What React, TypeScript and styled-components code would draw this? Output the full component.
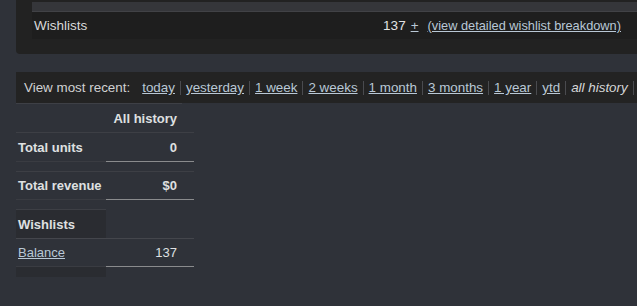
import React from 'react';
import styled, { createGlobalStyle } from 'styled-components';

const GlobalStyle = createGlobalStyle`
  html, body {
    margin: 0;
    padding: 0;
    background: #2f3239;
    overflow: hidden;
  }
  body {
    width: 637px;
    height: 306px;
    font-family: 'Liberation Sans', Arial, sans-serif;
    font-size: 13px;
    color: #d6d7d8;
  }
`;

const ranges = ['today', 'yesterday', '1 week', '2 weeks', '1 month', '3 months', '1 year', 'ytd'];

type Row = {
  label: string;
  value: string;
  height: number;
  link?: boolean;
  bold?: boolean;
  gapBefore?: boolean;
  section?: boolean;
};

const rows: Row[] = [
  { label: 'Total units', value: '0', height: 29, bold: true },
  { label: 'Total revenue', value: '$0', height: 28, bold: true, gapBefore: true },
  { label: 'Wishlists', value: '', height: 29, section: true, gapBefore: true },
  { label: 'Balance', value: '137', height: 28, link: true },
];

export default function App() {
  return (
    <Page>
      <GlobalStyle />
      <TopPanel>
        <TopStrip />
        <SummaryRow>
          <span>Wishlists</span>
          <SummaryValue>
            137 <Link href="#">+</Link>
            <BreakdownLink href="#">(view detailed wishlist breakdown)</BreakdownLink>
          </SummaryValue>
        </SummaryRow>
      </TopPanel>

      <RangeBar>
        <RangeLabel>View most recent:</RangeLabel>
        {ranges.map((r) => (
          <React.Fragment key={r}>
            <Link href="#">{r}</Link>
            <Sep />
          </React.Fragment>
        ))}
        <Current>all history</Current>
        <Sep />
      </RangeBar>

      <TopRule />
      <Stats>
        <LabelCell $height={29} $line="#3d3f45" />
        <ValueCell $height={29} $bold $line="#3d3f45">
          All history
        </ValueCell>
        {rows.map((row) => (
          <React.Fragment key={row.label}>
            {row.gapBefore && <Spacer $section={row.section} />}
            <LabelCell
              $height={row.height}
              $bold={row.bold || row.section}
              $section={row.section}
              $line={row.section ? '#44464c' : '#3a3c42'}
            >
              {row.link ? <Link href="#">{row.label}</Link> : row.label}
            </LabelCell>
            <ValueCell $height={row.height} $bold={row.bold} $line={row.section ? '#44464c' : '#8a8b8d'}>
              {row.value}
            </ValueCell>
          </React.Fragment>
        ))}
        <Tail />
      </Stats>
    </Page>
  );
}

const Page = styled.div`
  display: flex;
  flex-direction: column;
  padding-left: 16px;
`;

const TopPanel = styled.div`
  background: #222222;
  border-bottom-left-radius: 4px;
  padding: 2px 0 15px 16px;
`;

const TopStrip = styled.div`
  height: 9px;
  background: #35363a;
  border-bottom: 1px solid #414246;
`;

const SummaryRow = styled.div`
  display: flex;
  align-items: center;
  justify-content: space-between;
  height: 27px;
  padding: 0 16px 0 2px;
  background: #1e1e1e;
  font-size: 13.5px;
  color: #d8d9da;
`;

const SummaryValue = styled.span`
  display: flex;
  align-items: baseline;
  gap: 5px;
  color: #e2e3e4;
`;

const Link = styled.a`
  color: #b9c8d6;
  text-decoration: underline;
`;

const BreakdownLink = styled(Link)`
  margin-left: 4px;
  font-size: 12.8px;
`;

const RangeBar = styled.div`
  display: flex;
  align-items: center;
  height: 31px;
  margin-top: 18px;
  padding-left: 8px;
  background: #232323;
  white-space: nowrap;
  font-size: 13.4px;
  color: #d0d1d2;
`;

const RangeLabel = styled.span`
  margin-right: 12px;
`;

const Sep = styled.span`
  flex: none;
  width: 1px;
  height: 14px;
  margin: 0 5px;
  background: #4a4b4f;
`;

const Current = styled.span`
  font-style: italic;
  color: #d6d7d8;
`;

const TopRule = styled.div`
  width: 166px;
  height: 1px;
  background: #3e4046;
`;

const Stats = styled.div`
  display: grid;
  grid-template-columns: 90px 88px;
  width: 178px;
`;

const LabelCell = styled.div<{ $height: number; $line: string; $bold?: boolean; $section?: boolean }>`
  display: flex;
  align-items: center;
  height: ${(p) => p.$height - 1}px;
  padding-left: 2px;
  font-weight: ${(p) => (p.$bold ? 700 : 400)};
  color: #dfe0e1;
  background: ${(p) => (p.$section ? '#2a2c31' : 'transparent')};
  border-bottom: 1px solid ${(p) => p.$line};
`;

const ValueCell = styled.div<{ $height: number; $line: string; $bold?: boolean }>`
  display: flex;
  align-items: center;
  justify-content: flex-end;
  height: ${(p) => p.$height - 1}px;
  padding-right: 17px;
  font-weight: ${(p) => (p.$bold ? 700 : 400)};
  color: #dfe0e1;
  border-bottom: 1px solid ${(p) => p.$line};
`;

const Spacer = styled.div<{ $section?: boolean }>`
  grid-column: 1 / -1;
  display: flex;
  align-items: flex-end;
  height: 10px;

  &::after {
    content: '';
    width: ${(p) => (p.$section ? '90px' : '100%')};
    height: 1px;
    background: #3d3f45;
  }
`;

const Tail = styled.div`
  height: 10px;
  width: 90px;
  background: #2a2c31;
`;
